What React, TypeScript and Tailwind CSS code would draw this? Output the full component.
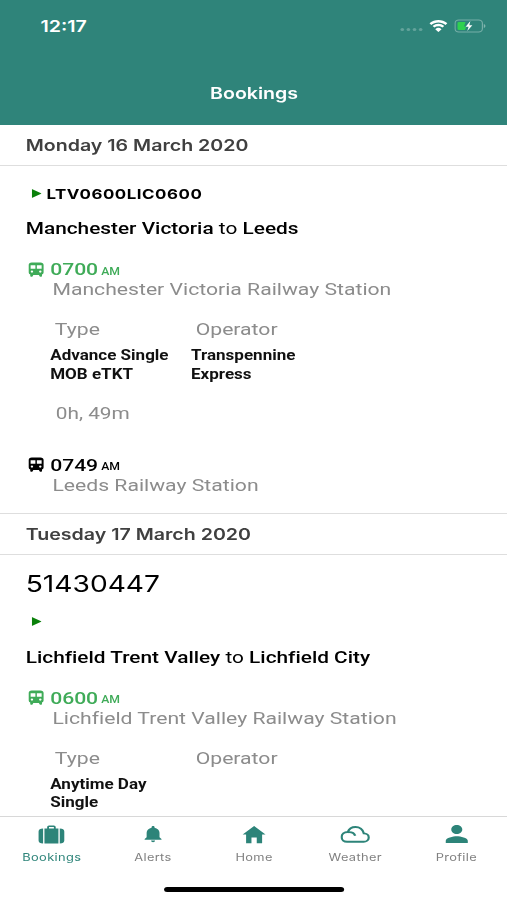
import type { ReactNode } from "react";
import { IoMdHome, IoMdNotifications, IoMdPerson } from "react-icons/io";

type Journey = {
    date: string;
    number?: string;
    reference?: string;
    from: string;
    to: string;
    departs: string;
    type: string[];
    operator: string[];
    duration?: string;
    arrives?: string;
};

const journeys: Journey[] = [
    {
        date: "Monday 16 March 2020",
        reference: "LTV0600LIC0600",
        from: "Manchester Victoria",
        to: "Leeds",
        departs: "0700",
        type: ["Advance Single", "MOB eTKT"],
        operator: ["Transpennine", "Express"],
        duration: "0h, 49m",
        arrives: "0749",
    },
    {
        date: "Tuesday 17 March 2020",
        number: "51430447",
        from: "Lichfield Trent Valley",
        to: "Lichfield City",
        departs: "0600",
        type: ["Anytime Day", "Single"],
        operator: [],
    },
];

const TrainIcon = () => (
    <svg viewBox="0 0 13 15" className="h-[15px] w-[13px]" fill="currentColor" fillRule="evenodd">
        <path d="M3 .4h7Q12.600.4 12.600 3v7.500q0 1.700-1.300 2.100v1.400q0 .7-.7.700h-.7q-.5 0-.7-.6l-.4-1.200H4.200l-.4 1.200q-.2.600-.7.600h-.7q-.7 0-.7-.7v-1.400Q.4 12.200.4 10.500V3Q.4.400 3 .4zM2 3.200v3.500h3.900V3.200zm5.100 0v3.500H11V3.200zM3.100 8.500a1 1.100 0 1 0 0 2.200 1 1.100 0 0 0 0-2.200zm6.800 0a1 1.100 0 1 0 0 2.200 1 1.100 0 0 0 0-2.200z" />
    </svg>
);

const SuitcaseIcon = () => (
    <svg viewBox="0 0 22 19" className="h-[19px] w-[22px]" fill="currentColor">
        <path d="M5.300 3.400h2.200V2Q7.500.4 9 .4h4q1.500 0 1.500 1.600v1.400h2.200v15.200H5.300zM9 3.400h4V1.900H9z" />
        <path d="M4.200 3.400v15.200Q.5 18.600.5 15.600V6.400Q.5 3.400 4.200 3.400zM17.800 3.400v15.200q3.700 0 3.700-3V6.400q0-3-3.700-3z" />
    </svg>
);

const WeatherIcon = () => (
    <svg viewBox="0 0 24 17" className="h-[17px] w-6" fill="none" stroke="currentColor" strokeWidth="1.900">
        <path d="M5.400 15.800h13.400a4.200 4.200 0 0 0 .3-8.400C18.400 3.600 15.600 1 12.300 1 9.400 1 7 2.800 6 6 3 6 .95 8 .95 11s2 4.800 4.450 4.800z" />
        <path d="M6 6.200c3.200-.3 5.400 1 6 3.600" />
    </svg>
);

const tabs: { label: string; icon: ReactNode; active?: boolean }[] = [
    { label: "Bookings", icon: <SuitcaseIcon />, active: true },
    { label: "Alerts", icon: <IoMdNotifications className="size-[20px]" /> },
    { label: "Home", icon: <IoMdHome className="size-[23px]" /> },
    { label: "Weather", icon: <WeatherIcon /> },
    { label: "Profile", icon: <IoMdPerson className="size-[24px]" /> },
];

const StatusBar = () => (
    <div className="flex h-[52px] items-center justify-between pr-[17px] pl-[33px]">
        <span className="font-['Inter',sans-serif] text-[16px] font-semibold">12:17</span>
        <div className="flex items-center">
            <div className="mt-[7px] mr-[5px] flex gap-[1.500px]">
                {[0, 1, 2, 3].map((dot) => (
                    <span key={dot} className="size-[3.400px] rounded-full bg-white/25" />
                ))}
            </div>
            <svg viewBox="0 0 17 12" className="mr-[5px] h-3 w-4" fill="currentColor" preserveAspectRatio="none">
                <path d="M8.500 2.400c2.400 0 4.600.9 6.200 2.500l1.300-1.300a.4.4 0 0 0 0-.6C14 1.100 11.300.1 8.500.1S3 1.100 1 3a.4.4 0 0 0 0 .6l1.300 1.300c1.600-1.600 3.800-2.500 6.200-2.500z" />
                <path d="M8.500 6.300c1.300 0 2.500.5 3.500 1.300l1.300-1.300a.4.4 0 0 0 0-.6 7 7 0 0 0-9.600 0 .4.4 0 0 0 0 .6L5 7.600a5.200 5.200 0 0 1 3.500-1.300z" />
                <path d="M11 9a3.700 3.700 0 0 0-5 0 .4.4 0 0 0 0 .6l2.200 2.200q.3.3.6 0L11 9.600a.4.4 0 0 0 0-.6z" />
            </svg>
            <svg viewBox="0 0 27 14" className="h-[14px] w-[26px]" fill="none" preserveAspectRatio="none">
                <rect x=".6" y="1" width="23.200" height="12" rx="3.200" stroke="white" strokeOpacity=".35" />
                <path d="M25 5v4q1.400-.6 1.400-2T25 5z" fill="white" fillOpacity=".4" />
                <path d="M4 3h5.500L8.200 7.400h2L9 11H4q-1.300 0-1.300-1.300V4.300Q2.700 3 4 3z" fill="#2fd14f" />
                <path d="M13.600 2 9.600 7.800h2.500L11 12l4.300-5.800h-2.600z" fill="white" />
            </svg>
        </div>
    </div>
);

const DateHeading = ({ children }: { children: ReactNode }) => (
    <h2 className="h-[41px] border-b border-[#dedede] pl-[21px] font-['Inter',sans-serif] text-[16px] leading-10 font-semibold text-[#404040]">
        {children}
    </h2>
);

const Stop = ({ time, station }: { time: string; station: string }) => (
    <>
        <div className="flex h-5 items-center">
            <span className="mr-[5px] ml-[1px]">
                <TrainIcon />
            </span>
            <span className="text-[17.300px] leading-5 font-medium tracking-[-0.05px]">{time}</span>
            <span className="mt-[5px] ml-[2.500px] text-[10px] leading-4 font-medium">AM</span>
        </div>
        <p className="ml-[20.800px] h-[21px] text-[17.300px] leading-[21px] text-[#8c8c8c] [font-variant-ligatures:none]">
            {station} Railway Station
        </p>
    </>
);

const Detail = ({ label, lines }: { label: string; lines: string[] }) => (
    <div className="w-[115px]">
        <p className="ml-[3.800px] text-[17.300px] leading-5 text-[#8c8c8c]">{label}</p>
        <div className="mt-[7px] h-[38px] text-[13.900px] leading-[18.500px] font-bold whitespace-nowrap text-[#111]">
            {lines.map((line) => (
                <p key={line}>{line}</p>
            ))}
        </div>
    </div>
);

const JourneyCard = ({ journey }: { journey: Journey }) => (
    <section className="shrink-0 border-b border-[#dedede]">
        <DateHeading>{journey.date}</DateHeading>
        <div className="pt-[14px] pb-[17px] pl-[21px] text-black">
            {journey.number && (
                <p className="mb-[14px] font-['Inter',sans-serif] text-[23px] leading-[30px]">
                    {journey.number}
                </p>
            )}
            <div className="mt-1 flex h-5 items-center">
                <svg viewBox="0 0 8 9" className="mb-[2px] ml-[4.500px] h-[9px] w-2 fill-[#0a800a]">
                    <path d="M0 0 8 4.500 0 9z" />
                </svg>
                <span className="mt-px ml-[4.500px] font-['Inter',sans-serif] text-[13.800px] font-bold tracking-[0.42px]">
                    {journey.reference}
                </span>
            </div>
            <h3 className="mt-[12px] text-[17px] leading-6 font-medium [font-variant-ligatures:none]">
                {journey.from} <span className="font-normal">to</span> {journey.to}
            </h3>
            <div className="mt-[19px] pl-px">
                <div className="[&>div]:text-[#3fab58]">
                    <Stop time={journey.departs} station={journey.from} />
                </div>
                <div className="mt-[19px] ml-[19px] flex">
                    <Detail label="Type" lines={journey.type} />
                    <Detail label="Operator" lines={journey.operator} />
                </div>
                {journey.duration && (
                    <p className="mt-[19px] ml-[23.500px] text-[17px] leading-5 text-[#8c8c8c]">
                        {journey.duration}
                    </p>
                )}
                {journey.arrives && (
                    <div className="mt-[31.500px]">
                        <Stop time={journey.arrives} station={journey.to} />
                    </div>
                )}
            </div>
        </div>
    </section>
);

const TabBar = () => (
    <nav className="relative z-10 flex h-[84px] shrink-0 flex-col items-center border-t border-[#d8d8d8] bg-white">
        <div className="grid w-full grid-cols-5 pl-px">
            {tabs.map((tab) => (
                <div key={tab.label} className="flex flex-col items-center pt-[5px]">
                    <span className="flex h-6 items-center text-[#2d8479]">{tab.icon}</span>
                    <span
                        className={`mt-1 font-['Inter',sans-serif] text-[10.500px] leading-4 tracking-[0.28px] ${tab.active ? "text-[#2d8479]" : "text-[#808080]"}`}
                    >
                        {tab.label}
                    </span>
                </div>
            ))}
        </div>
        <div className="mt-[21px] h-[5px] w-[147px] rounded-full bg-black" />
    </nav>
);

const App = () => (
    <div className="h-[900px] w-[507px] overflow-hidden bg-white">
        <div className="flex h-[900px] w-[414px] origin-top-left scale-x-[1.2246] flex-col font-['Roboto',sans-serif]">
            <header className="h-[125px] shrink-0 bg-[#2f847a] text-white">
                <StatusBar />
                <h1 className="mt-[29px] pl-px text-center font-['Inter',sans-serif] text-[16px] leading-6 font-semibold">
                    Bookings
                </h1>
            </header>
            <main className="flex min-h-0 flex-1 flex-col overflow-hidden">
                {journeys.map((journey) => (
                    <JourneyCard key={journey.date} journey={journey} />
                ))}
            </main>
            <TabBar />
        </div>
    </div>
);

export default App;
